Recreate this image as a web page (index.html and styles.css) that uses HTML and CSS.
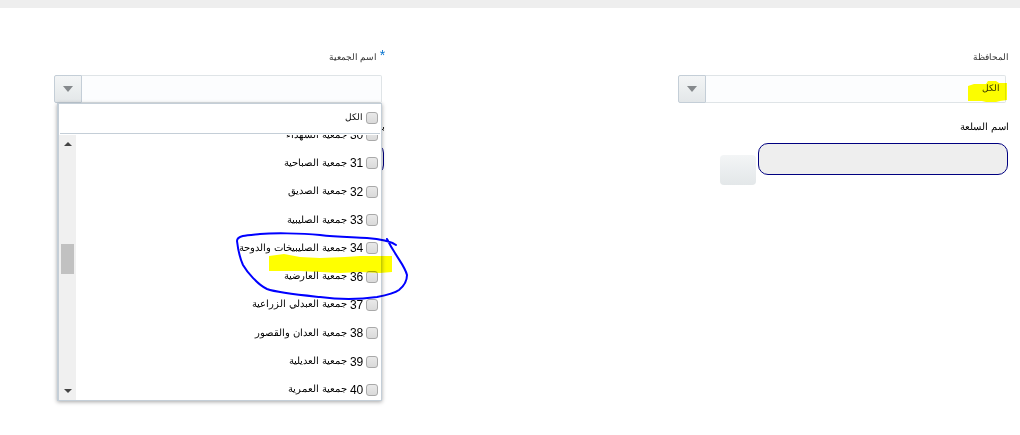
FILE: index.html
```html
<!DOCTYPE html>
<html lang="ar" dir="rtl">
<head>
    <meta charset="UTF-8">
    <title>اسم الجمعية</title>
    <meta name="viewport" content="width=device-width, initial-scale=1">
    <link rel="stylesheet" href="styles.css">
</head>
<body>
    <div class="topbar"></div>
    <form class="filters">
        <div class="column">
            <label class="title" for="governorate">المحافظة</label>
            <div class="combo">
                <input type="text" id="governorate" class="combo-text" value="الكل">
                <button type="button" class="combo-arrow" aria-label="المحافظة"></button>
                <svg class="marker" viewBox="0 0 40 22">
                    <path fill="#ff0" d="M0 5L6 3H18L20 0H28L31 2H39V19L32 20L28 21H18L14 20H0Z"/>
                </svg>
            </div>
            <label class="title item-title" for="item">اسم السلعة</label>
            <div class="item-row">
                <input type="text" id="item" class="item-text">
                <button type="button" class="item-button" aria-label="اسم السلعة"></button>
            </div>
        </div>

        <div class="column">
            <label class="title" for="coop"><span class="required">*</span> اسم الجمعية</label>
            <div class="combo">
                <input type="text" id="coop" class="combo-text">
                <button type="button" class="combo-arrow" aria-label="اسم الجمعية"></button>
                <div class="menu">
                    <label class="option all"><input type="checkbox"><span>الكل</span></label>
                    <div class="menu-body">
                        <div class="options">
                            <label class="option"><input type="checkbox"><b>30</b><span>جمعية الشهداء</span></label>
                            <label class="option"><input type="checkbox"><b>31</b><span>جمعية الصباحية</span></label>
                            <label class="option"><input type="checkbox"><b>32</b><span>جمعية الصديق</span></label>
                            <label class="option"><input type="checkbox"><b>33</b><span>جمعية الصليبية</span></label>
                            <label class="option"><input type="checkbox"><b>34</b><span>جمعية الصليبيخات والدوحة</span></label>
                            <label class="option"><input type="checkbox"><b>36</b><span>جمعية العارضية</span></label>
                            <label class="option"><input type="checkbox"><b>37</b><span>جمعية العبدلي الزراعية</span></label>
                            <label class="option"><input type="checkbox"><b>38</b><span>جمعية العدان والقصور</span></label>
                            <label class="option"><input type="checkbox"><b>39</b><span>جمعية العديلية</span></label>
                            <label class="option"><input type="checkbox"><b>40</b><span>جمعية العمرية</span></label>
                        </div>
                        <div class="scrollbar">
                            <span class="scroll-up"></span>
                            <span class="thumb"></span>
                            <span class="scroll-down"></span>
                        </div>
                    </div>
                    <svg class="notes" viewBox="230 228 182 76">
                        <path fill="#ff0" d="M269 256L284 254L300 257L320 258L345 257L360 256H392V272L380 273L360 272L340 273L300 271H269Z"/>
                        <path fill="none" stroke="#00f" stroke-width="2" stroke-linecap="round" stroke-linejoin="round" d="M396 245C390 241 382 239 367 238C350 237 336 237 320 235C300 233 272 233 260 234C250 235 237 235 237 241C238 250 239 256 243 265C247 272 258 285 267 289C278 293 300 295 320 297C335 299 355 300 377 297C388 295 395 293 399 290C404 286 407 280 407 275C405 267 399 260 395 253C391 247 389 243 387 239"/>
                    </svg>
                </div>
            </div>
            <label class="title item-title" for="extra">بـ</label>
            <div class="item-row">
                <input type="text" id="extra" class="item-text">
            </div>
        </div>
    </form>
</body>
</html>
```
FILE: styles.css
```css
* {
    box-sizing: border-box;
}

body {
    min-height: 100vh;
    margin: 0;
    background: #fff;
    color: #000;
    font-family: "Liberation Sans", Arial, sans-serif;
    font-size: 10px;
}

input, button {
    margin: 0;
    padding: 0;
    font: inherit;
}

.topbar {
    height: 8px;
    background: #eee;
}

.filters {
    display: grid;
    grid-template-columns: 34fr 21fr;
    padding: 40px 11px 0 0;
}

.title {
    display: block;
    height: 18px;
    line-height: 18px;
    color: #333;
    font-size: 9px;
}

.item-title {
    margin-top: 15px;
    color: #000;
    font-size: 10px;
}

.required {
    color: #0572ce;
    font-size: 14px;
    line-height: 14px;
}

.combo {
    position: relative;
    display: flex;
    width: 328px;
    height: 28px;
    margin: 9px 3px 0 0;
}

.combo-text {
    flex: 1;
    min-width: 0;
    padding: 0 5px 2px;
    border: 1px solid #dfe4e7;
    border-left: none;
    border-radius: 0 2px 2px 0;
    background: #fcfdfe;
    color: #333;
    font-size: 9px;
}

.combo-arrow {
    display: flex;
    align-items: center;
    justify-content: center;
    width: 28px;
    border: 1px solid #c4ced7;
    border-radius: 2px 0 0 2px;
    background: linear-gradient(#f3f5f6, #e3e7e9);
}

    .combo-arrow::before {
        content: "";
        border: 5px solid transparent;
        border-top: 6px solid #85898c;
        border-bottom: none;
    }

.marker {
    position: absolute;
    top: 6px;
    right: -2px;
    width: 40px;
    height: 22px;
    mix-blend-mode: multiply;
    pointer-events: none;
}

.item-row {
    display: flex;
    gap: 2px;
    margin: 7px 1px 0 0;
}

.item-text {
    width: 250px;
    height: 32px;
    padding: 0 8px;
    border: 1px solid #000080;
    border-radius: 10px;
    background: #eee;
}

.item-button {
    width: 36px;
    height: 30px;
    margin-top: 12px;
    border: none;
    border-radius: 4px;
    background: linear-gradient(#f3f5f6, #e3e7e9);
}

.menu {
    position: absolute;
    z-index: 1;
    top: 28px;
    right: 0;
    left: 3px;
    border: 1px solid #c4ced7;
    border-left-width: 2px;
    background: #fff;
    box-shadow: 0 1px 4px rgba(0, 0, 0, 0.35);
}

.option {
    display: flex;
    flex: 1;
    align-items: center;
    gap: 3px;
    padding-right: 3px;
    white-space: nowrap;
}

    .option b {
        font-size: 12px;
        font-weight: normal;
    }

    .option span {
        padding-bottom: 2px;
    }

    .option input {
        appearance: none;
        width: 12px;
        height: 12px;
        border: 1px solid #a9a9a9;
        border-radius: 3px;
        background: linear-gradient(#e9e9e9, #dadada);
    }

.all {
    height: 30px;
    margin: 0 1px;
    padding: 0 2px 2px 0;
    border-bottom: 1px solid #c4ced7;
    font-size: 9px;
}

.menu-body {
    display: flex;
    height: 265px;
    margin-top: 1px;
    overflow: hidden;
}

.options {
    display: flex;
    flex: 1;
    flex-direction: column;
    height: 283px;
    margin-top: -14px;
}

.scrollbar {
    display: flex;
    flex-direction: column;
    align-items: center;
    width: 17px;
    padding: 7px 0;
    background: #f0f0f0;
}

.scroll-up {
    border: 4px solid transparent;
    border-top: none;
    border-bottom: 4px solid #444;
}

.thumb {
    width: 13px;
    height: 30px;
    margin: 98px 0 auto;
    background: #c1c1c1;
}

.scroll-down {
    border: 4px solid transparent;
    border-top: 4px solid #444;
    border-bottom: none;
}

.notes {
    position: absolute;
    top: 124px;
    right: -31px;
    width: 182px;
    height: 76px;
    mix-blend-mode: multiply;
    pointer-events: none;
}
```
